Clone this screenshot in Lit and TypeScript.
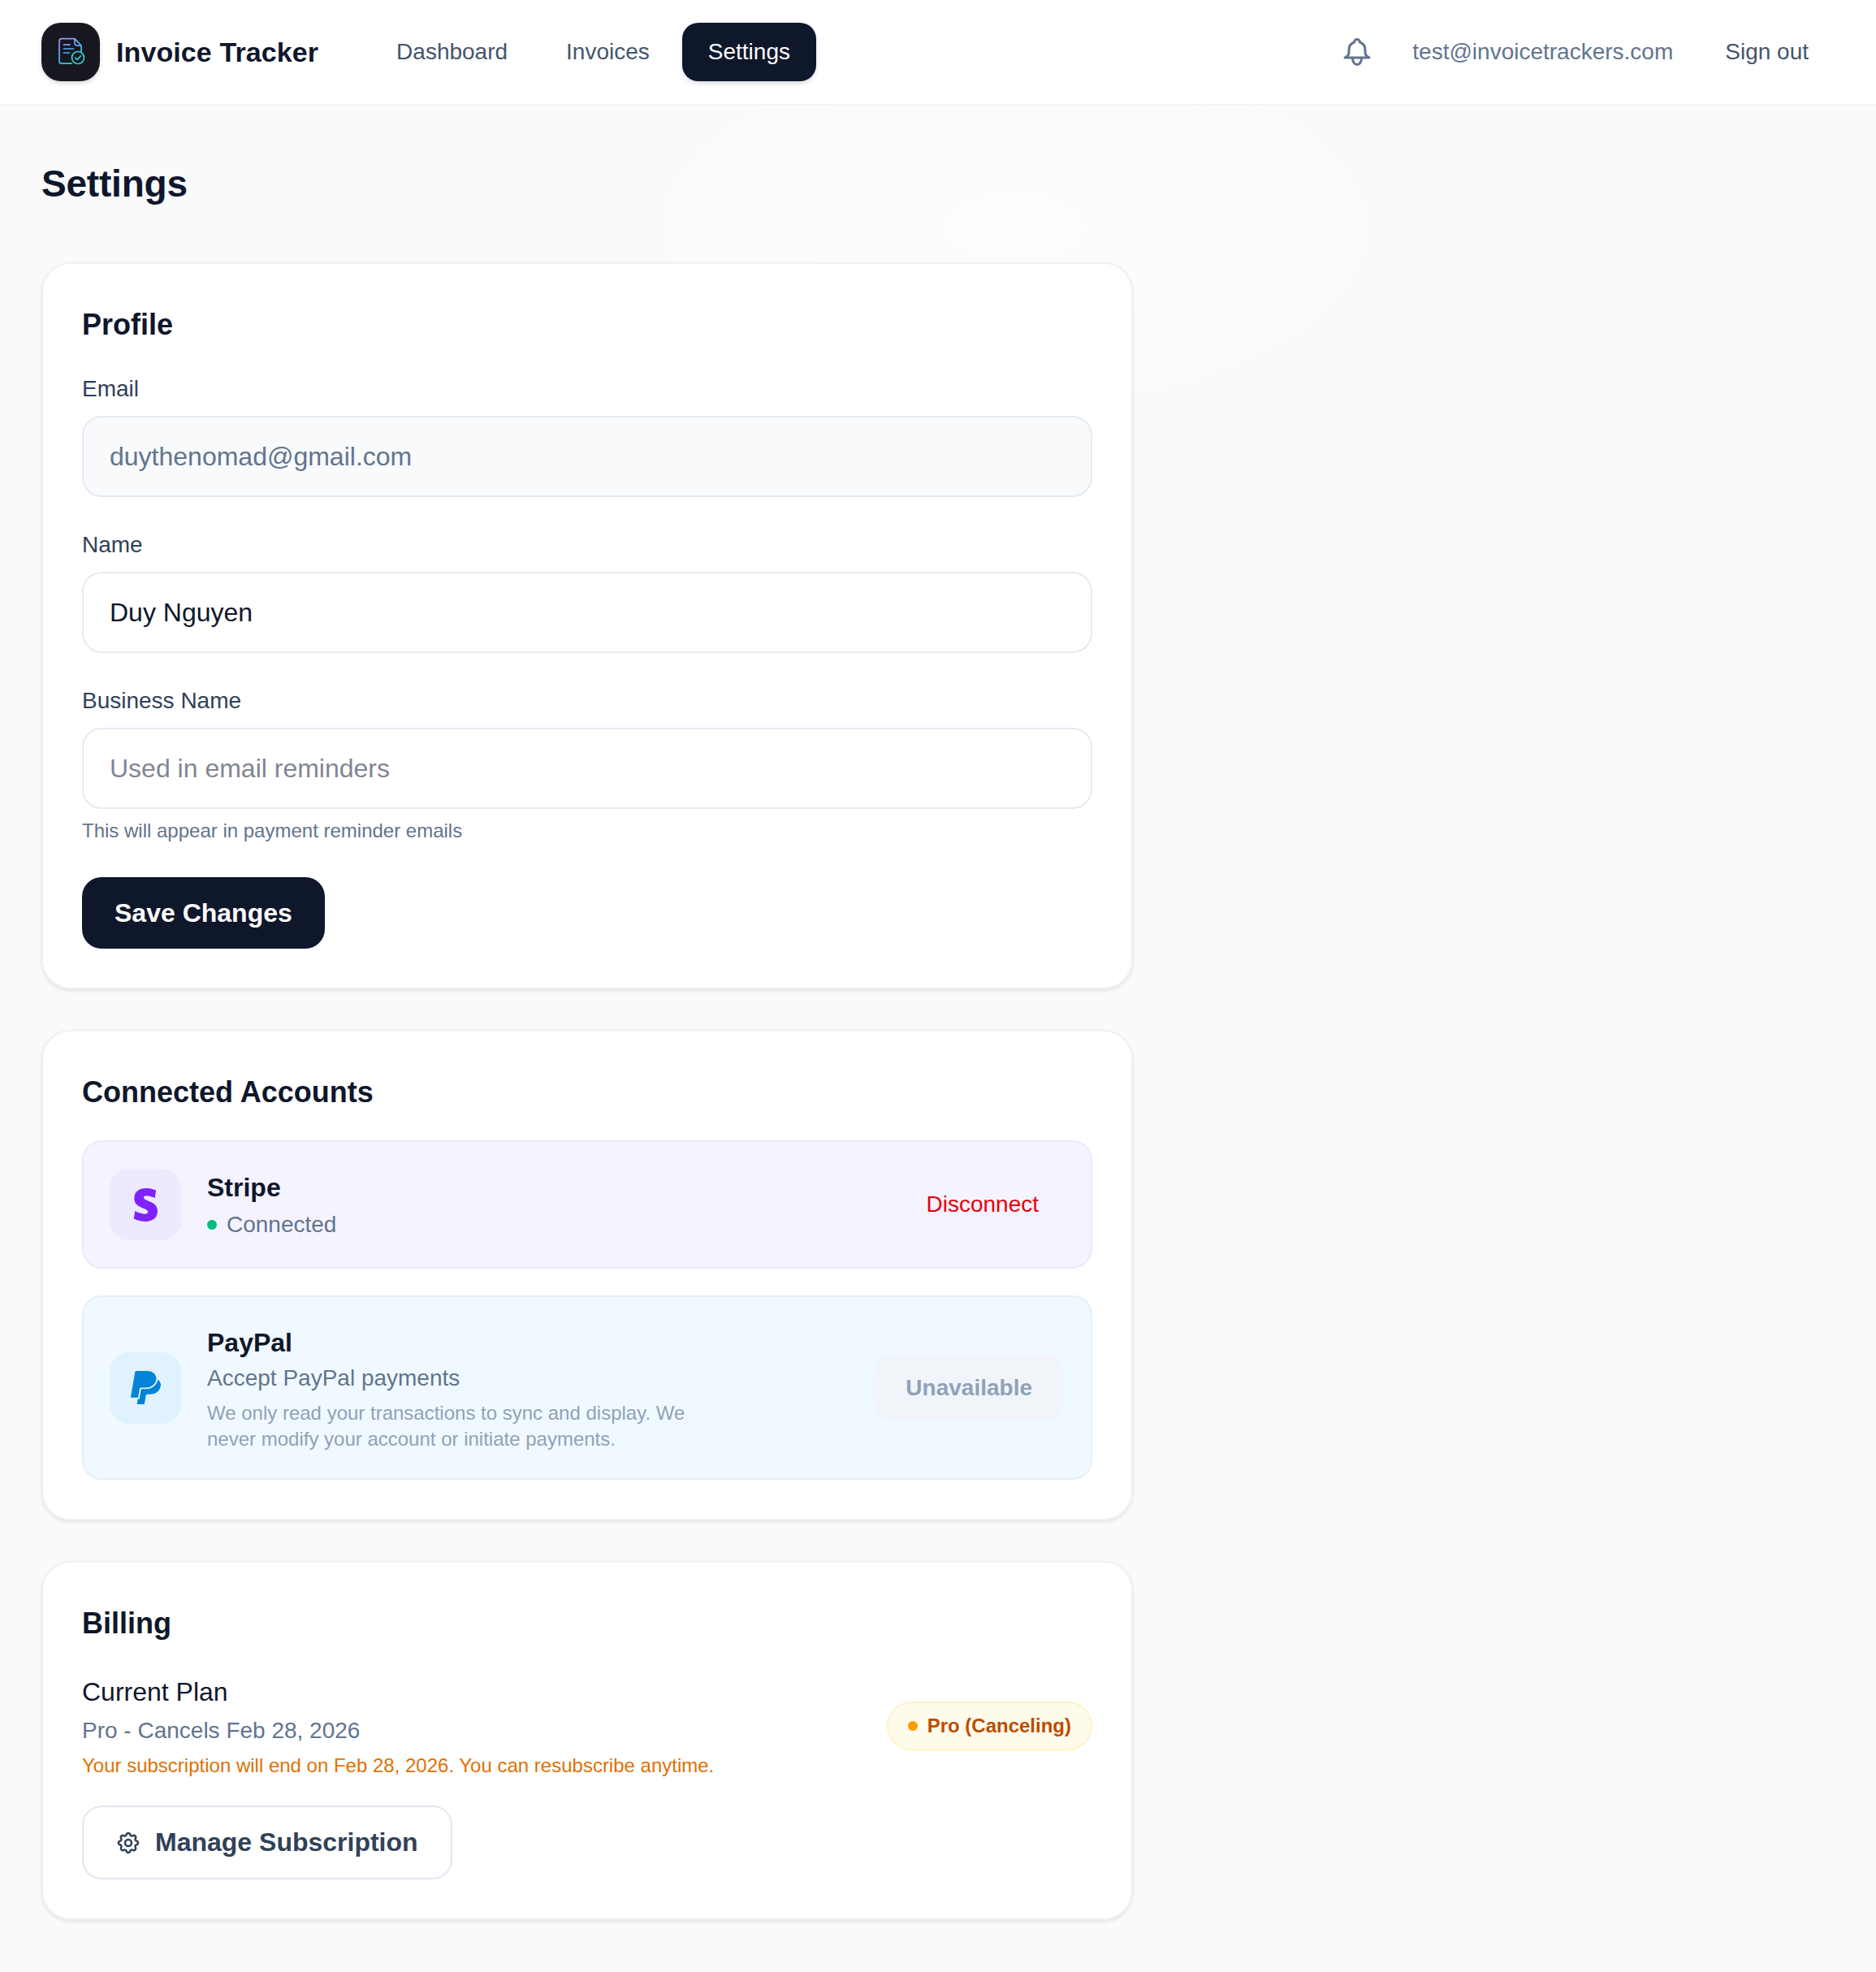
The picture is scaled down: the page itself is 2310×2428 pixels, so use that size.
import { LitElement, html, css } from "lit";
import { customElement } from "lit/decorators.js";

const logoIcon = html`<svg class="logo-icon" viewBox="0 0 36 36" fill="none">
  <defs>
    <linearGradient id="logoGrad" x1="4" y1="1" x2="26" y2="33" gradientUnits="userSpaceOnUse">
      <stop offset="0" stop-color="#b08cf5" />
      <stop offset="0.55" stop-color="#4fb0f5" />
      <stop offset="1" stop-color="#2dd4d8" />
    </linearGradient>
  </defs>
  <path d="M23 1.700H7a3 3 0 0 0-3 3v24.500a3 3 0 0 0 3 3h12M23 1.700l8 8.500v7M23 1.700v5.500a3 3 0 0 0 3 3h5" stroke="url(#logoGrad)" stroke-width="1.700" stroke-linejoin="round" stroke-linecap="round" />
  <path d="M9.500 9.200h7.500M9.500 14h12M9.500 19h7" stroke="url(#logoGrad)" stroke-width="1.700" stroke-linecap="round" />
  <circle cx="27" cy="25" r="7.500" stroke="#2dd4d8" stroke-width="1.700" />
  <path d="m23.800 25.200 2.300 2.300 4.200-4.600" stroke="#2dd4d8" stroke-width="1.700" stroke-linecap="round" stroke-linejoin="round" />
</svg>`;

const bellIcon = html`<svg class="bell" viewBox="0 0 36 36" fill="none" stroke="#62748e" stroke-width="3" stroke-linecap="round" stroke-linejoin="round">
  <path d="M14.500 6a3.500 3.500 0 0 1 7 0c4.500 1.500 6.500 5.500 6.500 10v3c0 2.500 2 4.500 5 6H3c3-1.500 5-3.500 5-6v-3c0-4.500 2-8.500 6.500-10z" />
  <path d="M12.500 26a5.500 7.500 0 0 0 11 0" />
</svg>`;

const gearIcon = html`<svg class="gear" viewBox="0 0 24 24" fill="none" stroke="#314158" stroke-width="1.900" stroke-linecap="round" stroke-linejoin="round">
  <path d="M10.325 4.317c.426-1.756 2.924-1.756 3.350 0a1.724 1.724 0 0 0 2.573 1.066c1.543-.94 3.310.826 2.370 2.370a1.724 1.724 0 0 0 1.065 2.572c1.756.426 1.756 2.924 0 3.350a1.724 1.724 0 0 0-1.066 2.573c.94 1.543-.826 3.310-2.370 2.370a1.724 1.724 0 0 0-2.572 1.065c-.426 1.756-2.924 1.756-3.350 0a1.724 1.724 0 0 0-2.573-1.066c-1.543.94-3.310-.826-2.370-2.370a1.724 1.724 0 0 0-1.065-2.572c-1.756-.426-1.756-2.924 0-3.350a1.724 1.724 0 0 0 1.066-2.573c-.94-1.543.826-3.310 2.370-2.370.996.608 2.296.07 2.572-1.065z" />
  <circle cx="12" cy="12" r="3" />
</svg>`;

const stripeIcon = html`<svg class="stripe-logo" viewBox="3 0 17.600 24" fill="#7f22fe">
  <path d="M13.976 9.150c-2.172-.806-3.356-1.426-3.356-2.409 0-.831.683-1.305 1.901-1.305 2.227 0 4.515.858 6.090 1.631l.89-5.494C18.252.975 15.697 0 12.165 0 9.667 0 7.589.654 6.104 1.872 4.560 3.147 3.757 4.992 3.757 7.218c0 4.039 2.467 5.760 6.476 7.219 2.585.92 3.445 1.574 3.445 2.583 0 .98-.84 1.545-2.354 1.545-1.875 0-4.965-.921-6.990-2.109l-.9 5.555C5.175 22.990 8.385 24 11.714 24c2.641 0 4.843-.624 6.328-1.813 1.664-1.305 2.525-3.236 2.525-5.732 0-4.128-2.524-5.851-6.594-7.305h.003z" />
</svg>`;

const paypalIcon = html`<svg class="paypal-logo" viewBox="2.260 0 19.500 24" preserveAspectRatio="none" fill="#0284d6">
  <path d="M7.016 19.198h-4.200a.562.562 0 0 1-.555-.65L5.093.584A.692.692 0 0 1 5.776 0h7.222c3.417 0 5.904 2.488 5.846 5.500-.006.25-.027.5-.066.747A6.794 6.794 0 0 1 12.071 12H8.743a.69.69 0 0 0-.682.583l-.325 2.056-.013.083-.692 4.390-.015.087zM19.790 6.142c-.01.087-.01.175-.023.261a7.760 7.760 0 0 1-7.695 6.598H9.007l-.283 1.795-.013.083-.692 4.390-.134.843-.014.088H6.860l-.497 3.150a.562.562 0 0 0 .555.65h3.612c.34 0 .63-.249.683-.585l.952-6.031a.692.692 0 0 1 .683-.584h2.126a6.793 6.793 0 0 0 6.707-5.752c.306-1.950-.466-3.744-1.890-4.906z" />
</svg>`;

@customElement("app-root")
export class AppRoot extends LitElement {
  static styles = css`
    :host {
      display: block;
      min-height: 2428px;
      background: radial-gradient(ellipse 520px 260px at 1250px 280px, rgba(255, 255, 255, 0.6), transparent), #fafafb;
      color: #0f172b;
      font-family: "Liberation Sans", Arial, sans-serif;
    }
    * {
      box-sizing: border-box;
    }
    .topbar {
      display: flex;
      align-items: center;
      height: 130px;
      padding: 0 51px;
      background: #fff;
      border-bottom: 2px solid #f1f5f9;
    }
    .brand {
      display: flex;
      align-items: center;
      gap: 20px;
      margin-right: 64px;
    }
    .logo {
      display: flex;
      align-items: center;
      justify-content: center;
      width: 72px;
      height: 72px;
      border-radius: 24px;
      background: #17181f;
      box-shadow: 0 3px 5px rgba(15, 23, 42, 0.14);
    }
    .logo-icon {
      width: 36px;
      height: 36px;
    }
    .brand-name {
      font-size: 34px;
      font-weight: 700;
      letter-spacing: 0.1px;
    }
    .nav {
      display: flex;
      align-items: center;
      gap: 8px;
    }
    .nav-link {
      display: flex;
      align-items: center;
      height: 72px;
      padding: 0 32px;
      border-radius: 20px;
      font-size: 28px;
      color: #45556c;
    }
    .nav-link.active {
      background: #0f172b;
      color: #fff;
      box-shadow: 0 3px 5px rgba(15, 23, 42, 0.14);
    }
    .top-right {
      display: flex;
      align-items: center;
      margin-left: auto;
    }
    .bell {
      width: 36px;
      height: 36px;
      margin-right: 50px;
    }
    .user-email {
      font-size: 28px;
      color: #62748e;
      margin-right: 32px;
    }
    .sign-out {
      padding: 0 32px;
      font-size: 28px;
      color: #45556c;
    }
    main {
      padding: 50px 51px 64px;
    }
    h1 {
      margin: 0 0 51px;
      font-size: 46px;
      line-height: 92px;
      font-weight: 700;
      letter-spacing: -0.2px;
    }
    .card {
      width: 1344px;
      margin-bottom: 50px;
      padding: 48px;
      background: #fff;
      border: 2px solid #eef2f6;
      border-radius: 36px;
      box-shadow: 0 2px 4px rgba(15, 23, 42, 0.1);
    }
    .card:last-child {
      margin-bottom: 0;
    }
    h2 {
      margin: 0;
      font-size: 36px;
      line-height: 54px;
      font-weight: 700;
    }
    .field {
      margin-top: 31px;
    }
    .field + .field {
      margin-top: 38px;
    }
    label {
      display: block;
      margin-bottom: 12px;
      font-size: 28px;
      line-height: 42px;
      color: #314158;
    }
    .input {
      display: flex;
      align-items: center;
      height: 100px;
      padding: 0 32px;
      border: 2px solid #e5eaf2;
      border-radius: 24px;
      font-size: 32px;
      background: #fff;
    }
    .input.disabled {
      background: #f8fafc;
      color: #62748e;
    }
    .input.placeholder {
      color: #7f8694;
    }
    .hint {
      margin-top: 9px;
      font-size: 24px;
      line-height: 36px;
      color: #62748e;
    }
    .btn-primary {
      display: inline-flex;
      align-items: center;
      height: 88px;
      margin-top: 39px;
      padding: 0 40px;
      border-radius: 24px;
      background: #0f172b;
      color: #fff;
      font-size: 32px;
      font-weight: 700;
    }
    .account {
      display: flex;
      align-items: center;
      margin-top: 32px;
      padding: 32px;
      border: 2px solid #e2e8f0;
      border-radius: 24px;
    }
    .account.stripe {
      padding: 30px 32px;
      background: #f5f3ff;
      border-color: #ece9f8;
    }
    .account.paypal {
      margin-top: 33px;
      background: #f0f9ff;
      border-color: #e6eff8;
    }
    .account-icon {
      display: flex;
      flex: none;
      align-items: center;
      justify-content: center;
      width: 88px;
      height: 88px;
      margin-right: 32px;
      border-radius: 24px;
    }
    .stripe .account-icon {
      background: #ede9fe;
    }
    .paypal .account-icon {
      background: #dff2fe;
    }
    .stripe-logo {
      width: 30px;
      height: 41px;
    }
    .paypal-logo {
      width: 37px;
      height: 41px;
    }
    .account-body {
      flex: 1;
      padding-top: 2px;
    }
    .stripe .account-body {
      padding-top: 4px;
    }
    .stripe .account-status {
      margin-top: 2px;
    }
    .account-name {
      font-size: 32px;
      line-height: 44px;
      font-weight: 700;
    }
    .account-status {
      display: flex;
      align-items: center;
      gap: 12px;
      font-size: 28px;
      line-height: 44px;
      color: #62748e;
    }
    .dot {
      flex: none;
      width: 12px;
      height: 12px;
      border-radius: 50%;
    }
    .dot.green {
      background: #00bc7d;
    }
    .dot.amber {
      background: #fe9a00;
    }
    .account-note {
      max-width: 620px;
      margin-top: 5px;
      font-size: 24px;
      line-height: 32px;
      color: #90a1b9;
    }
    .disconnect {
      padding: 0 32px;
      font-size: 28px;
      color: #e7000b;
    }
    .unavailable {
      display: flex;
      align-items: center;
      height: 81px;
      padding: 0 40px;
      border-radius: 24px;
      background: #f1f5f9;
      color: #90a1b9;
      font-size: 28px;
      font-weight: 700;
    }
    .plan-row {
      display: flex;
      align-items: center;
      justify-content: space-between;
      margin-top: 32px;
    }
    .plan-title {
      font-size: 32px;
      line-height: 51px;
    }
    .plan-sub {
      font-size: 28px;
      line-height: 44px;
      color: #62748e;
    }
    .plan-warn {
      margin-top: 2px;
      font-size: 24px;
      line-height: 38px;
      color: #e17100;
    }
    .badge {
      display: flex;
      align-items: center;
      gap: 12px;
      height: 60px;
      margin-top: -1px;
      padding: 0 24px;
      border: 2px solid #fef3c6;
      border-radius: 999px;
      background: #fffbeb;
      color: #bb4d00;
      font-size: 24px;
      font-weight: 700;
    }
    .btn-outline {
      display: inline-flex;
      align-items: center;
      gap: 17px;
      height: 91px;
      margin-top: 30px;
      padding: 0 40px 0 39px;
      border: 2px solid #e2e8f0;
      border-radius: 24px;
      color: #314158;
      font-size: 32px;
      font-weight: 700;
    }
    .gear {
      width: 32px;
      height: 32px;
    }
  `;

  render() {
    return html`
      <header class="topbar">
        <div class="brand">
          <div class="logo">${logoIcon}</div>
          <div class="brand-name">Invoice Tracker</div>
        </div>
        <nav class="nav">
          <a class="nav-link">Dashboard</a>
          <a class="nav-link">Invoices</a>
          <a class="nav-link active">Settings</a>
        </nav>
        <div class="top-right">
          ${bellIcon}
          <span class="user-email">test@invoicetrackers.com</span>
          <span class="sign-out">Sign out</span>
        </div>
      </header>
      <main>
        <h1>Settings</h1>

        <section class="card">
          <h2>Profile</h2>
          <div class="field">
            <label>Email</label>
            <div class="input disabled">duythenomad@gmail.com</div>
          </div>
          <div class="field">
            <label>Name</label>
            <div class="input">Duy Nguyen</div>
          </div>
          <div class="field">
            <label>Business Name</label>
            <div class="input placeholder">Used in email reminders</div>
            <div class="hint">This will appear in payment reminder emails</div>
          </div>
          <div class="btn-primary">Save Changes</div>
        </section>

        <section class="card">
          <h2>Connected Accounts</h2>
          <div class="account stripe">
            <div class="account-icon">${stripeIcon}</div>
            <div class="account-body">
              <div class="account-name">Stripe</div>
              <div class="account-status"><span class="dot green"></span>Connected</div>
            </div>
            <div class="disconnect">Disconnect</div>
          </div>
          <div class="account paypal">
            <div class="account-icon">${paypalIcon}</div>
            <div class="account-body">
              <div class="account-name">PayPal</div>
              <div class="account-status">Accept PayPal payments</div>
              <div class="account-note">We only read your transactions to sync and display. We never modify your account or initiate payments.</div>
            </div>
            <div class="unavailable">Unavailable</div>
          </div>
        </section>

        <section class="card">
          <h2>Billing</h2>
          <div class="plan-row">
            <div>
              <div class="plan-title">Current Plan</div>
              <div class="plan-sub">Pro - Cancels Feb 28, 2026</div>
              <div class="plan-warn">Your subscription will end on Feb 28, 2026. You can resubscribe anytime.</div>
            </div>
            <div class="badge"><span class="dot amber"></span>Pro (Canceling)</div>
          </div>
          <div class="btn-outline">${gearIcon}Manage Subscription</div>
        </section>
      </main>
    `;
  }
}
